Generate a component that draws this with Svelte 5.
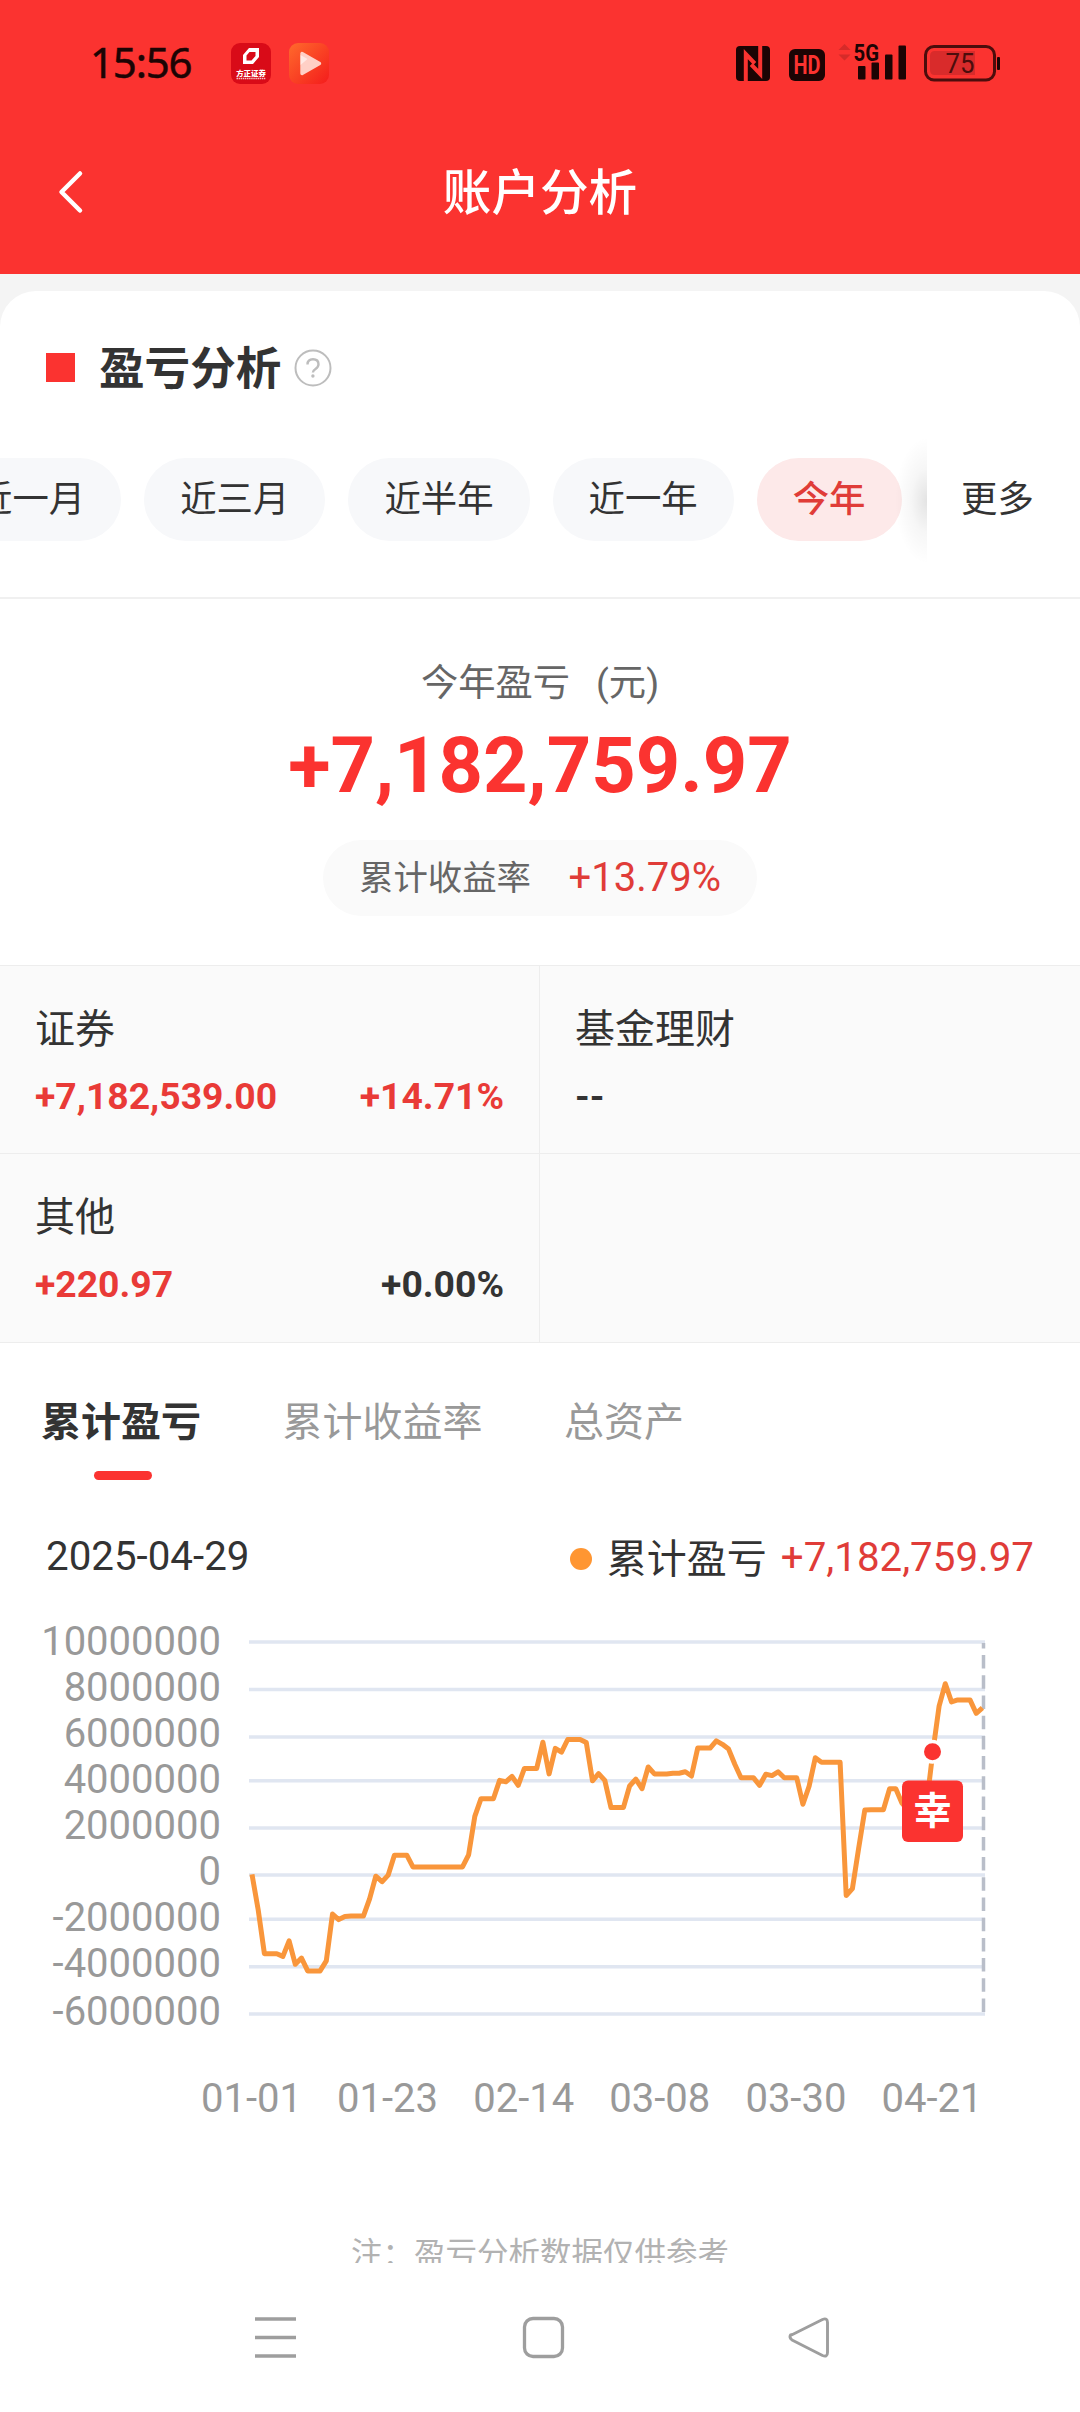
<script>
  const ranges = ['近一月', '近三月', '近半年', '近一年', '今年'];
  const assets = [
    { name: '证券', value: '+7,182,539.00', rate: '+14.71%', up: true, rateUp: true },
    { name: '基金理财', value: '--', rate: '', up: false, rateUp: false },
    { name: '其他', value: '+220.97', rate: '+0.00%', up: true, rateUp: false },
    { name: '', value: '', rate: '', up: false, rateUp: false }
  ];
  const tabs = ['累计盈亏', '累计收益率', '总资产'];

  // Axis label, gridline y and label centre y
  const yAxis = [
    ['10000000', 42, 41], ['8000000', 89.5, 87], ['6000000', 137, 133],
    ['4000000', 180.8, 179], ['2000000', 228, 225], ['0', 275, 271],
    ['-2000000', 319.3, 317], ['-4000000', 366.7, 363], ['-6000000', 414, 410.5]
  ];
  const xAxis = ['01-01', '01-23', '02-14', '03-08', '03-30', '04-21'];

  // One value per calendar day, in units of 1/2.904 px
  const daily = [
    797, 900, 1027, 1027, 1027, 1035, 990, 1058, 1040, 1077, 1077, 1077, 1048, 912, 928, 919, 918, 918, 918,
    868, 802, 818, 799, 741, 741, 741, 775, 775, 775, 775, 775, 775, 775, 775, 775, 740, 628, 577, 577, 577,
    524, 528, 512, 538, 489, 489, 489, 413, 505, 431, 442, 405, 405, 405, 414, 525, 504, 524, 603, 603, 603,
    540, 520, 548, 485, 505, 505, 505, 503, 503, 499, 511, 430, 430, 430, 409, 419, 433, 477, 516, 516, 516,
    538, 506, 510, 499, 516, 516, 516, 593, 541, 458, 471, 471, 471, 471, 858, 838, 722, 610, 609, 609, 609,
    548, 548, 590, 610, 610, 610, 590, 440, 308, 243, 296, 290, 290, 290, 329, 313
  ];
  const line = daily.map((v, i) => `${(252 + i * 6.19).toFixed(1)},${(v / 2.904).toFixed(1)}`).join(' ');
</script>

<div class="page">
  <header>
    <div class="status">
      <span class="time">15:56</span>
      <svg class="app" viewBox="0 0 40 41">
        <rect width="40" height="41" rx="9" fill="#d90b18" />
        <path fill="#fff" fill-rule="evenodd" d="M18 5h10v9l-6 7H12v-9zM18.500 9l-3 3.500v5h5l4-4.500V9z" />
        <text x="20" y="32.500" text-anchor="middle" font-size="7.400" font-weight="900" fill="#fff">方正证券</text>
        <path d="M5.500 35.500h29" stroke="#fff" stroke-width="1.300" stroke-dasharray="1.500 .6" opacity=".75" />
      </svg>
      <svg class="app second" viewBox="0 0 40 41">
        <defs>
          <linearGradient id="play" x1="0" y1="0" x2="1" y2="1">
            <stop offset="0" stop-color="#ff6a2c" />
            <stop offset="1" stop-color="#f41c1c" />
          </linearGradient>
        </defs>
        <rect width="40" height="41" rx="9" fill="url(#play)" />
        <path d="M13 10.500v20L30.500 20.500z" fill="#ffd0c6" stroke="#ffd0c6" stroke-width="3.400" stroke-linejoin="round" />
        <path d="M11.500 12v10l7-6z" fill="#fff" opacity=".55" />
      </svg>
      <svg class="signals" viewBox="0 0 270 44">
        <g fill="#1c0404">
          <rect x="0" y="5" width="34" height="35" rx="4" />
          <path d="M9.800 40V13l9 9.500M24.200 5v28l-9-9.500" fill="none" stroke="#fb3330" stroke-width="4" />
          <rect x="53" y="8" width="36" height="32" rx="6" />
          <text x="71" y="33" text-anchor="middle" font-size="25" font-weight="700" textLength="27" lengthAdjust="spacingAndGlyphs" class="red">HD</text>
          <text x="117.500" y="20" font-size="24" font-weight="700" textLength="25.500" lengthAdjust="spacingAndGlyphs">5G</text>
          <rect x="122" y="25" width="7.500" height="13.500" rx="1" />
          <rect x="135.500" y="21.500" width="7.500" height="17" rx="1" />
          <rect x="149" y="13.500" width="7.500" height="25" rx="1" />
          <rect x="162.500" y="4.500" width="7.500" height="34" rx="1" />
          <rect x="261" y="16" width="3" height="13" rx="1" />
        </g>
        <path d="M102.500 9l6-6 6 6zM102.500 13.500h12l-6 6z" fill="#d52b29" />
        <rect x="189.500" y="5.500" width="69" height="33.500" rx="8.500" fill="none" stroke="#4c0d0c" stroke-width="3" />
        <path d="M199 10h40v24h-40q-5 0-5-5V15q0-5 5-5z" fill="#d92b2b" />
        <text x="209.500" y="32" font-size="27.500" textLength="29" lengthAdjust="spacingAndGlyphs" fill="#4c0d0c">75</text>
      </svg>
    </div>
    <div class="titlebar">
      <svg class="back" viewBox="0 0 28 46"><path d="M23 4.500L4.500 23 23 41.500" fill="none" stroke="#fff" stroke-width="4.500" stroke-linecap="round" stroke-linejoin="round" /></svg>
      <h1>账户分析</h1>
    </div>
  </header>

  <main>
    <section class="heading">
      <i class="mark"></i>
      <h2>盈亏分析</h2>
      <svg class="help" viewBox="0 0 38 38">
        <circle cx="19" cy="19" r="17.500" fill="none" stroke="#bdbdbd" stroke-width="2" />
        <path d="M13.500 15.500q0-5.300 5.500-5.300t5.500 5q0 2.700-3 4.700-2.600 1.700-2.600 3.600" fill="none" stroke="#bdbdbd" stroke-width="2.400" />
        <circle cx="18.900" cy="27" r="1.700" fill="#bdbdbd" />
      </svg>
    </section>

    <nav class="ranges">
      <div class="chips">
        {#each ranges as r, i}
          <span class="chip" class:active={i === 4}>{r}</span>
        {/each}
      </div>
      <span class="more">更多</span>
    </nav>

    <section class="summary">
      <p class="label">今年盈亏<span>(元)</span></p>
      <p class="total">+7,182,759.97</p>
      <p class="rate"><span>累计收益率</span><b>+13.79%</b></p>
    </section>

    <section class="assets">
      {#each assets as a}
        <div class="cell">
          <p class="name">{a.name}</p>
          <p class="figures"><span class:up={a.up}>{a.value}</span><span class:up={a.rateUp}>{a.rate}</span></p>
        </div>
      {/each}
    </section>

    <nav class="tabs">
      {#each tabs as t, i}
        <span class="tab" class:current={i === 0}>{t}</span>
      {/each}
    </nav>

    <section class="legend">
      <span class="date">2025-04-29</span>
      <i></i>
      <span class="series">累计盈亏</span>
      <span class="amount">+7,182,759.97</span>
    </section>

    <svg class="chart" viewBox="0 0 1080 540">
      {#each yAxis as [label, gy, ty]}
        <path d="M249 {gy}H985" stroke="#e0e6f1" stroke-width="3.500" />
        <text x="221" y={ty + 14.300} text-anchor="end">{label}</text>
      {/each}
      <path d="M983.500 412V43" stroke="#b9bec9" stroke-width="3.500" stroke-dasharray="13.500 6.700" />
      {#each xAxis as d, i}
        <text x={251.5 + i * 136.1} y="511.500" text-anchor="middle">{d}</text>
      {/each}
      <polyline points={line} fill="none" stroke="#f9963b" stroke-width="5" stroke-linejoin="round" />
      <circle cx="932.500" cy="151.700" r="12" fill="#fff" />
      <circle cx="932.500" cy="151.700" r="8.500" fill="#fb3330" />
      <rect x="902" y="180.500" width="61" height="61.500" rx="6" fill="#fb3330" />
      <text class="badge" x="932.500" y="223.500" text-anchor="middle">幸</text>
    </svg>

    <p class="note">注：盈亏分析数据仅供参考</p>
  </main>

  <footer>
    <svg viewBox="0 0 1080 149" fill="none" stroke="#9e9e9e" stroke-width="3.300">
      <path d="M255 56h41M255 74.500h41M255 93h41" />
      <rect x="524.500" y="55.500" width="38" height="38" rx="8.500" />
      <path d="M790.500 72q-1.500 2.500 1.500 5L822.500 92.500q5 2 5-3V59.500q0-5-5-3L792.500 71.500z" stroke-width="2.900" stroke-linejoin="round" />
    </svg>
  </footer>
</div>

<style>
  :global(body) { background: #fff; }
  .page {
    width: 1080px; height: 2412px; overflow: hidden; background: #f4f4f4;
    display: flex; flex-direction: column; color: #333;
    font-family: Roboto, "Noto Sans CJK SC", sans-serif;
  }
  p, h1, h2 { margin: 0; white-space: nowrap; }
  svg { display: block; flex: none; }
  header { height: 274px; flex: none; background: #fb3330; }
  .status { height: 126px; display: flex; align-items: center; padding-left: 90px; box-sizing: border-box; }
  .time { width: 141px; font: 400 42px/48px "Noto Sans", sans-serif; color: #1c0404; letter-spacing: -1.200px; -webkit-text-stroke: .5px #1c0404; padding-bottom: 2px; }
  .app { width: 40px; height: 41px; }
  .second { margin-left: 18px; }
  .signals { width: 270px; height: 44px; margin-left: 407px; overflow: visible; }
  .red { fill: #fb3330; }
  .titlebar { height: 132px; display: grid; grid-template-columns: 200px 1fr 200px; align-items: center; }
  .back { width: 28px; height: 46px; margin-left: 57px; }
  h1 { text-align: center; font-size: 48.6px; line-height: 60px; font-weight: 500; color: #fff; padding-top: 4px; }

  main {
    flex: none; height: 1972px; margin-top: 17px; background: #fff; overflow: hidden;
    border-radius: 36px 36px 0 0; display: flex; flex-direction: column;
  }
  main > * { flex: none; }
  .heading { height: 152px; display: flex; align-items: center; padding-left: 46px; }
  .mark { width: 29px; height: 29px; background: #fb3330; }
  h2 { margin-left: 24px; font-size: 45.6px; line-height: 56px; font-weight: 700; padding-top: 6px; }
  .help { width: 38px; height: 38px; margin: 2px 0 0 13px; }
  .ranges { height: 154px; border-bottom: 2px solid #f0f0f0; display: flex; align-items: flex-start; }
  .chips { width: 927px; margin-top: 15px; display: flex; justify-content: flex-end; gap: 23px; padding-right: 25.500px; box-sizing: border-box; }
  .chip {
    flex: none; padding: 0 36px; height: 83px; line-height: 83px; border-radius: 42px;
    background: #f7f8fa; font-size: 36.4px;
  }
  .active { background: #fde9e9; color: #e03c38; font-weight: 500; }
  .more {
    position: relative; width: 153px; height: 115px; line-height: 114px; padding-left: 34px;
    box-sizing: border-box; background: #fff; font-size: 36.4px;
  }
  .more::before {
    content: ""; position: absolute; right: 100%; top: -6px; width: 32px; height: 127px;
    background: radial-gradient(ellipse 100% 50% at 100% 50%, rgba(0, 0, 0, .11), rgba(0, 0, 0, .035) 50%, transparent);
  }
  .summary { height: 366px; display: flex; flex-direction: column; align-items: center; }
  .label { margin-top: 57px; font-size: 37.3px; line-height: 54px; color: #666; }
  .label span { margin-left: 26px; }
  .total { margin-top: 6px; font-size: 77.6px; line-height: 100px; font-weight: 700; color: #fb3330; }
  .rate {
    margin-top: 24px; width: 434px; height: 76px; border-radius: 38px; background: #fafafa; box-sizing: border-box;
    display: flex; align-items: center; justify-content: space-between; padding: 0 36px 1px; color: #666; font-size: 34.4px;
  }
  .rate span { margin-bottom: 5px; }
  .rate b { font-weight: 400; font-size: 40px; color: #e03c38; }
  .assets {
    height: 378px; display: grid; grid-template: 187px 188px / 539px 1fr; background: #ededed;
    gap: 1px; padding: 1px 0; box-sizing: border-box;
  }
  .cell { background: #fafafa; padding: 35px 35px 0 35px; }
  .name { font-size: 40px; line-height: 58px; height: 58px; }
  .figures { margin-top: 15px; display: flex; justify-content: space-between; font-size: 37.3px; line-height: 44px; font-weight: 700; }
  .up { color: #e93a37; }
  .tabs { height: 152px; display: flex; gap: 81.500px; padding: 50px 0 0 41px; box-sizing: border-box; }
  .tab { font-size: 40px; line-height: 60px; color: #999; display: flex; flex-direction: column; align-items: center; }
  .current { color: #333; font-weight: 700; }
  .current::after { content: ""; width: 58px; height: 9px; margin: 18px 0 0 4px; border-radius: 5px; background: #fb3330; }
  .legend { height: 105px; display: flex; align-items: flex-start; padding: 34px 46px 0; box-sizing: border-box; font-size: 40px; line-height: 56px; }
  .date { flex: 1; font-size: 40.300px; }
  .legend i { width: 22px; height: 22px; margin: 19px 15px 0 0; border-radius: 50%; background: #ff9632; }
  .series { margin-top: 3px; }
  .amount { margin: 1px 0 0 14px; color: #e03c38; font-size: 40.300px; }
  .chart { width: 1080px; height: 540px; font-size: 40px; fill: #999; }
  .badge { font-size: 38px; font-weight: 700; fill: #fff; }
  .note { margin-top: 91px; text-align: center; font-size: 31.500px; line-height: 48px; color: #b2b2b2; }
  footer { flex: none; height: 149px; background: #fff; }
  footer svg { width: 1080px; height: 149px; }
</style>
